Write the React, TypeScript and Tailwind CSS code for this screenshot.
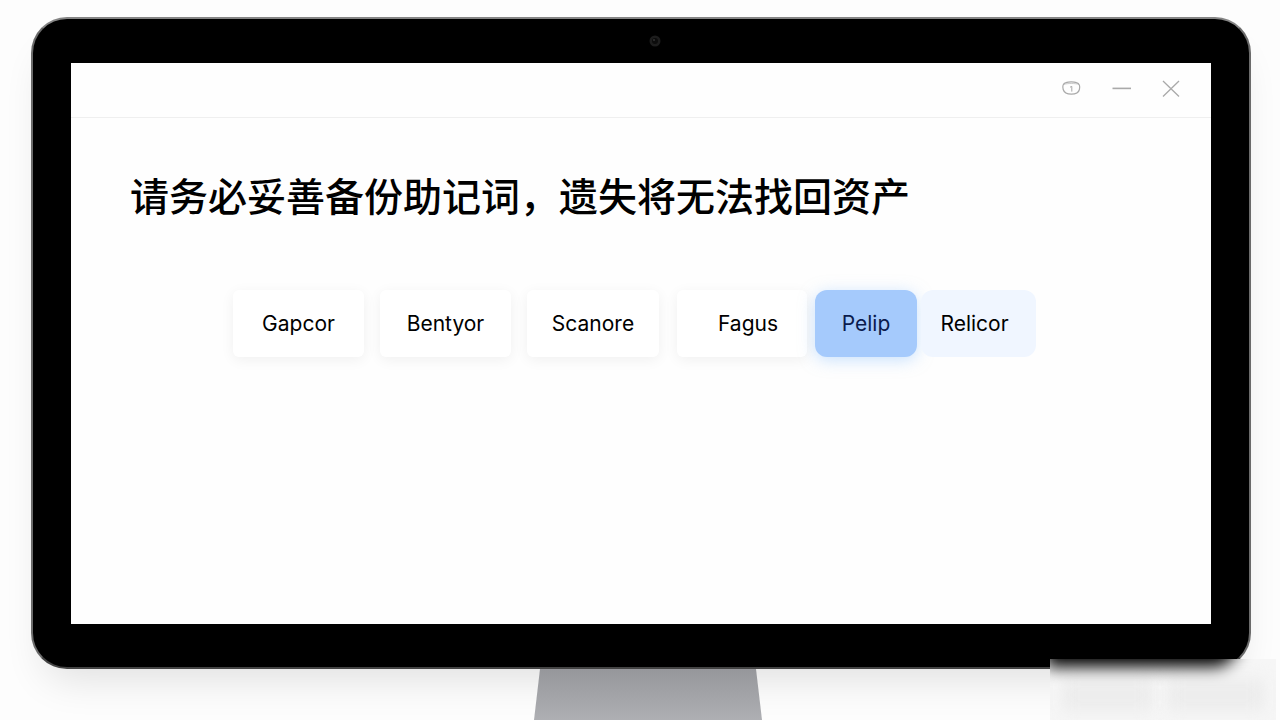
import { useState } from 'react';

type Word = {
  text: string;
  className: string;
};

const words: Word[] = [
  { text: 'Gapcor', className: 'w-[131px]' },
  { text: 'Bentyor', className: 'ml-4 w-[131px]' },
  { text: 'Scanore', className: 'ml-4 w-[132px]' },
  { text: 'Fagus', className: 'ml-[18px] w-[130px] pl-3' },
  { text: 'Pelip', className: 'ml-2 w-[102px]' },
  { text: 'Relicor', className: 'ml-1 w-[115px] pr-2' },
];

const cardStyles = 'rounded-md bg-white text-black shadow-[0_3px_14px_rgba(0,0,0,0.06)]';
const selectedStyles = 'rounded-xl bg-[#a5cafc] text-[#0b1b4d] shadow-[0_3px_16px_rgba(147,197,253,0.5)]';
const hintStyles = 'rounded-xl bg-[#f0f6ff] text-black';

const TitleBar = () => (
  <header className="flex h-[55px] items-center justify-end gap-[30px] border-b border-[#efefef] pr-[30px] pb-1 text-[#a9a9a9]">
    <button type="button" aria-label="Info" className="flex h-6 w-5 items-center justify-center">
      <svg width="20" height="20" viewBox="0 0 20 20" fill="none" stroke="currentColor" strokeWidth="1.2">
        <path d="M5 4.6C7.5 3.6 13 3.6 15.4 4.6C18.6 5.2 19.2 8.4 18.4 11.5C17.6 15 14.8 16.2 10.4 16.2C6 16.2 3.2 15.2 2.2 11.5C1.3 8.2 1.8 5.4 5 4.6Z" />
        <path d="M3 6.4C6 5.2 14.8 5.2 18 6.4" strokeWidth="0.6" />
        <path d="M9 9.2L10.8 8.4V13.6" strokeWidth="1" />
      </svg>
    </button>
    <button type="button" aria-label="Minimize" className="flex h-6 w-5 items-center justify-center">
      <svg width="20" height="20" viewBox="0 0 20 20" fill="none" stroke="currentColor" strokeWidth="1.6">
        <path d="M1.5 10.4H20" />
      </svg>
    </button>
    <button type="button" aria-label="Close" className="flex h-6 w-5 items-center justify-center">
      <svg width="20" height="20" viewBox="0 0 20 20" fill="none" stroke="currentColor" strokeWidth="1.3">
        <path d="M2 3L18 18.5M18 3L2 18.5" />
      </svg>
    </button>
  </header>
);

export default function App() {
  const [selected, setSelected] = useState('Pelip');

  const stylesFor = (text: string) => {
    if (text === selected) return selectedStyles;
    return text === 'Relicor' ? hintStyles : cardStyles;
  };

  return (
    <div className="relative flex min-h-screen flex-col overflow-hidden bg-[#fdfdfd] pt-[17px] font-['Inter','Noto_Sans_CJK_SC',sans-serif]">
      <div className="mr-[29px] ml-[31px] flex flex-1 flex-col rounded-[36px] border-2 border-t-[#858585] border-r-[#6b6b6b] border-b-[#444444] border-l-[#6b6b6b] bg-black px-[38px] pb-[43px] shadow-[0_24px_40px_-14px_rgba(0,0,0,0.12)]">
        <div className="flex h-11 items-center justify-center pl-7">
          <svg width="12" height="12" viewBox="0 0 12 12" aria-hidden="true">
            <circle cx="6" cy="6" r="5.5" fill="#1d1d1d" />
            <circle cx="6" cy="6" r="3" fill="#0c0c0c" />
            <circle cx="5" cy="5" r="1" fill="#333333" />
          </svg>
        </div>

        <div className="flex flex-1 flex-col bg-[#fefefe]">
          <TitleBar />
          <main className="flex-1 pt-[54px] pl-[59px]">
            <h1 lang="zh-CN" className="text-[39px] leading-[50px] font-medium text-black">
              请务必妥善备份助记词，遗失将无法找回资产
            </h1>
            <div className="mt-[68px] ml-[103px] flex">
              {words.map((word) => (
                <button
                  key={word.text}
                  type="button"
                  onClick={() => setSelected(word.text)}
                  className={`h-[67px] text-[21px] leading-7 ${word.className} ${stylesFor(word.text)}`}
                >
                  {word.text}
                </button>
              ))}
            </div>
          </main>
        </div>
      </div>

      <div className="relative flex h-[51px] justify-center pl-4">
        <svg width="228" height="51" viewBox="0 0 228 51" aria-hidden="true">
          <defs>
            <linearGradient id="stand" x1="0" y1="0" x2="0" y2="1">
              <stop offset="0" stopColor="#96979b" />
              <stop offset="1" stopColor="#aeafb3" />
            </linearGradient>
          </defs>
          <path d="M6 0H222L228 51H0Z" fill="url(#stand)" />
        </svg>
      </div>

      <div className="absolute right-1 bottom-0 z-20 h-[61px] w-[226px] overflow-hidden bg-[#f6f6f6]">
        <div className="absolute top-5 left-3 h-8 w-[90px] bg-[#ececec] blur-[8px]" />
        <div className="absolute top-5 left-[118px] h-8 w-[96px] bg-[#ececec] blur-[8px]" />
        <div className="absolute -top-10 -left-1 h-12 w-[192px] rounded-br-3xl bg-black blur-[8px]" />
      </div>
    </div>
  );
}
